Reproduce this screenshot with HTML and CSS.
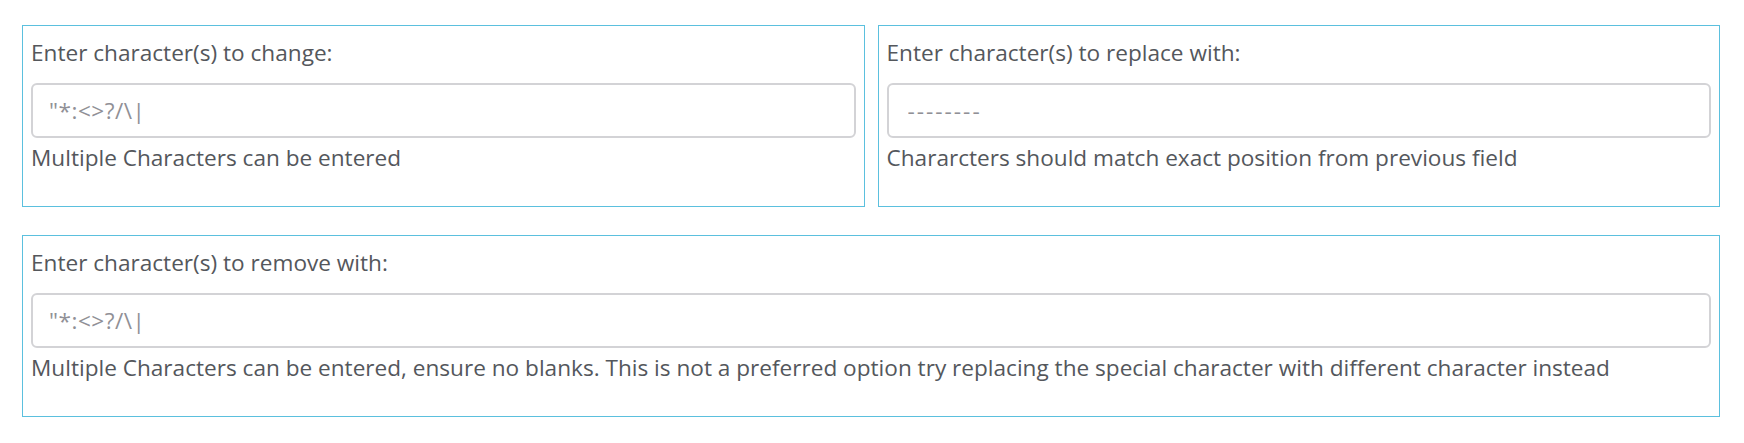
FILE: index.html
```html
<!DOCTYPE html>
<html lang="en">
<head>
<meta charset="utf-8">
<title>Character replacement</title>
<link rel="stylesheet" href="styles.css">
</head>
<body>
<div class="page">
  <div class="row">
    <div class="box">
      <label class="label" for="chg">Enter character(s) to change:</label>
      <input class="field" id="chg" type="text" placeholder="&quot;*:&lt;&gt;?/\|">
      <div class="help">Multiple Characters can be entered</div>
    </div>
    <div class="box">
      <label class="label" for="rep">Enter character(s) to replace with:</label>
      <input class="field field-dashes" id="rep" type="text" placeholder="--------">
      <div class="help">Chararcters should match exact position from previous field</div>
    </div>
  </div>
  <div class="row row-single">
    <div class="box">
      <label class="label" for="rem">Enter character(s) to remove with:</label>
      <input class="field" id="rem" type="text" placeholder="&quot;*:&lt;&gt;?/\|">
      <div class="help">Multiple Characters can be entered, ensure no blanks. This is not a preferred option try replacing the special character with different character instead</div>
    </div>
  </div>
</div>
</body>
</html>
```
FILE: styles.css
```css
html, body {
  margin: 0;
  padding: 0;
  background: #ffffff;
}
body {
  font-family: "Open Sans", "Noto Sans", sans-serif;
  font-size: 22.6px;
  color: #54575c;
}
.page {
  padding: 25px 24px 0 22px;
}
.row {
  display: grid;
  grid-template-columns: 1fr 1fr;
  column-gap: 13px;
}
.row-single {
  grid-template-columns: 1fr;
  margin-top: 28px;
}
.box {
  border: 1px solid #5bc0de;
  padding: 12px 8px 33px 8px;
  display: flex;
  flex-direction: column;
  min-width: 0;
}
.label {
  display: block;
  line-height: 30px;
  margin-bottom: 15px;
}
.field {
  box-sizing: border-box;
  height: 55px;
  width: 100%;
  border: 2px solid #d3d3d6;
  border-radius: 6px;
  padding: 0 16px;
  font-family: inherit;
  font-size: 22.6px;
  color: #54575c;
  background: #fff;
  outline: none;
}
.field::placeholder {
  color: #909096;
  opacity: 1;
  letter-spacing: 0.5px;
}
.field-dashes {
  padding-left: 19px;
}
.field-dashes::placeholder {
  letter-spacing: 2px;
}
.help {
  line-height: 30px;
  margin-top: 5px;
  white-space: nowrap;
}
```
